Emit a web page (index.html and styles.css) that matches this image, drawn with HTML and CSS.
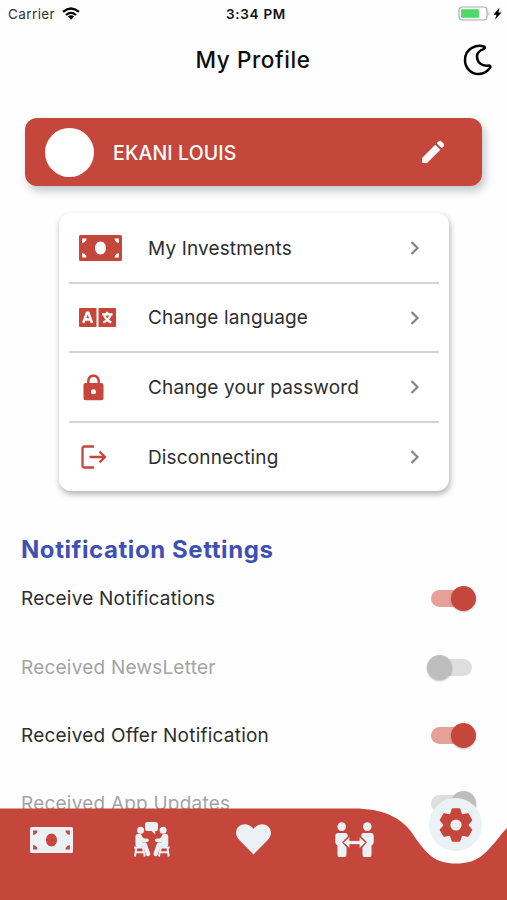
FILE: index.html
```html
<!DOCTYPE html>
<html lang="en">
<head>
<meta charset="utf-8">
<title>My Profile</title>
<link rel="stylesheet" href="styles.css">
</head>
<body>
<svg class="defs" width="0" height="0">
  <symbol id="chevron" viewBox="0 0 10 16"><path d="M1.500 2l6 6-6 6" fill="none" stroke="currentColor" stroke-width="2.200"/></symbol>
  <symbol id="cash" viewBox="0 0 43 26"><path fill="currentColor" fill-rule="evenodd" d="M1.500 0h40A1.500 1.500 0 0 1 43 1.500v23a1.500 1.500 0 0 1-1.500 1.500h-40A1.500 1.500 0 0 1 0 24.500v-23A1.500 1.500 0 0 1 1.500 0zM21.500 6.500c-3.100 0-5.500 2.900-5.500 6.500s2.400 6.500 5.500 6.500S27 16.600 27 13s-2.400-6.500-5.500-6.500zM3.200 3.500V8q4-.6 4.300-4.500zM39.800 3.500V8q-4-.6-4.300-4.500zM3.200 22.500V18q4 .6 4.300 4.500zM39.800 22.500V18q-4 .6-4.300 4.500z"/></symbol>
</svg>
<div class="screen">
  <div class="status">
    <span class="carrier">Carrier</span>
    <svg class="wifi" width="18" height="13" viewBox="0 0 18 13"><g fill="none" stroke="#000" stroke-width="2.200"><path d="M1 4.900Q9-1.900 17 4.900"/><path d="M4 8Q9 3.800 14 8"/></g><path d="M5.900 9.500Q9 7.200 12.100 9.500L9 12.700z"/></svg>
    <span class="time">3:34 PM</span>
    <svg class="battery" width="46" height="16" viewBox="0 0 46 16"><rect x="1" y="1" width="28" height="13" rx="3.500" fill="#fff" stroke="#aaa" stroke-width="1.200"/><rect x="3" y="3.200" width="18" height="8.600" rx="1" fill="#4cd964"/><path d="M30.500 5.500q2 2 0 4z" fill="#aaa"/><path d="M41.500 1.500L35.500 8.700h3L37 13.500 43.500 6.500h-3z"/></svg>
  </div>
  <header class="header">
    <h1>My Profile</h1>
    <svg class="moon" width="30" height="32" viewBox="0 0 30 32"><path d="M21.300 2.700C14 .2 2 4 2 16.200 2 24 8.300 30 15.600 30c5.200 0 9.400-2.900 11.500-6.300.8-1.500-.2-2.500-1.600-2.200C18.800 22.500 14 18.500 14 12.300c0-3.500 2.500-5.800 6.500-7.200 1.500-.6 1.700-1.900.8-2.400z" fill="none" stroke="#000" stroke-width="2.500" stroke-linejoin="round"/></svg>
  </header>
  <section class="profile">
    <span class="avatar"></span>
    <span class="name">EKANI LOUIS</span>
    <svg class="pencil" width="24" height="24" viewBox="0 0 24 24"><path fill="#fff" stroke="#fff" stroke-width="1.500" stroke-linejoin="round" d="M1.800 18.200L14.300 5.700l4 4L5.800 22.200h-4zM16.700 3.300l1.300-1.300q1-.8 2 0l2 2q.8 1 0 2l-1.300 1.300z"/></svg>
  </section>
  <nav class="menu">
    <div class="item"><span class="icon"><svg width="43" height="26"><use href="#cash"/></svg></span><span>My Investments</span><svg class="chev" width="10" height="16"><use href="#chevron"/></svg></div>
    <div class="item"><span class="icon"><svg width="37" height="19" viewBox="0 0 37 19"><path fill="currentColor" d="M1 0h16.500v19H1a1 1 0 0 1-1-1V1a1 1 0 0 1 1-1zM19.500 0H36a1 1 0 0 1 1 1v17a1 1 0 0 1-1 1H19.500z"/><path d="M4.300 14.800L8 4.700h1.400l3.600 10.100M5.500 11.600h6.400" fill="none" stroke="#fff" stroke-width="2.500"/><path d="M23 6.400h10.500M28.200 3.800v2.600M31.500 7c-1 3.700-4 6-7.300 7.600M25.300 7.500c1.300 3.200 3.500 5.400 7 7.100" fill="none" stroke="#fff" stroke-width="2.200"/></svg></span><span>Change language</span><svg class="chev" width="10" height="16"><use href="#chevron"/></svg></div>
    <div class="item"><span class="icon lock"><svg width="21" height="27" viewBox="0 0 21 27"><path fill="currentColor" fill-rule="evenodd" d="M4.100 9V7.200C4.100 3.200 6.800.5 10.500.5s6.400 2.700 6.400 6.700V9h1.600a2 2 0 0 1 2 2v13.300a2 2 0 0 1-2 2h-16a2 2 0 0 1-2-2V11a2 2 0 0 1 2-2zM6.500 9h8V7.200c0-2.700-1.600-4.300-4-4.300s-4 1.600-4 4.300zM10.500 15.200a2.500 2.500 0 1 0 0 5 2.500 2.500 0 1 0 0-5z"/></svg></span><span>Change your password</span><svg class="chev" width="10" height="16"><use href="#chevron"/></svg></div>
    <div class="item"><span class="icon exit"><svg width="26" height="24" viewBox="0 0 26 24"><path d="M13 1.500H3.500a2 2 0 0 0-2 2v17a2 2 0 0 0 2 2H13M8.500 12H24M18.500 6.500L24 12l-5.500 5.500" fill="none" stroke="currentColor" stroke-width="2.300"/></svg></span><span>Disconnecting</span><svg class="chev" width="10" height="16"><use href="#chevron"/></svg></div>
  </nav>
  <section class="settings">
    <h2>Notification Settings</h2>
    <div class="row"><span>Receive Notifications</span><span class="switch on"></span></div>
    <div class="row off"><span>Received NewsLetter</span><span class="switch"></span></div>
    <div class="row"><span>Received Offer Notification</span><span class="switch on"></span></div>
    <div class="row off"><span>Received App Updates</span><span class="switch on disabled"></span></div>
  </section>
  <footer class="tabbar">
    <svg class="wave" width="507" height="92" viewBox="0 0 507 92"><path fill="#c5463a" d="M0 0.500H354C382 .500 401 9 412 25C427 47 435 55.500 456 55.500C477 55.500 485 47 500 28Q504 23 507 20V92H0z"/></svg>
    <div class="tabs">
      <svg width="43" height="26"><use href="#cash"/></svg>
      <svg width="36" height="35" viewBox="0 0 36 35"><g fill="currentColor"><path d="M13.500 0h8q2.500 0 2.500 2.500v4Q24 9 22 9h-.8v3.300L17.500 9h-4Q11 9 11 6.500v-4Q11 0 13.500 0z"/><circle cx="6.600" cy="8.200" r="3.500"/><circle cx="29.100" cy="8.200" r="3.500"/></g><g id="sitter" fill="none" stroke="currentColor"><path d="M4.700 15V22" stroke-width="6.500" stroke-linecap="round"/><path d="M7 16l2 2.300h4" stroke-width="3.600" stroke-linecap="round" stroke-linejoin="round"/><path d="M5 22.500h5.800l3.300 9.500" stroke-width="4.300" stroke-linejoin="round" stroke-linecap="round"/><path d="M0 25.500h10M2.200 26L1 34.500M9 26l1.800 8.500M2 30.200h8" stroke-width="2"/></g><use href="#sitter" transform="matrix(-1 0 0 1 35.700 0)"/></svg>
      <svg width="35" height="31" viewBox="0 0 35 31"><path fill="currentColor" d="M17.500 30.500L3.300 16C-1.200 11.400-.6 5.600 2.800 2.500 7-1.300 13.500-.4 17.500 4.800 21.500-.4 28-1.300 32.200 2.500c3.400 3.100 4 8.900-.5 13.500z"/></svg>
      <svg width="39" height="36" viewBox="0 0 39 36"><g id="person" fill="currentColor"><circle cx="6.700" cy="4.600" r="4.300"/><path d="M3 11h7.200q2.500 0 2.500 2.500v1L7 20.300l4.500 5.200V33q0 2-2 2h-5.500q-1.500 0-1.500-2v-9.500Q.3 22.800.3 20v-6Q.3 11 3 11z"/></g><use href="#person" transform="matrix(-1 0 0 1 39 0)"/><path d="M8.300 20.600l6.500-6v4h9.400v-4l6.500 6-6.500 6v-4h-9.400v4z" fill="currentColor" stroke="#c5463a" stroke-width=".8"/></svg>
      <span class="active"><svg width="36" height="36" viewBox="-18 -18 36 36"><g fill="#c5463a"><circle r="12.600"/><path id="tooth" d="M-6.300-10L-4.500-15.500Q-4.200-16.700-3.200-16.700H3.200Q4.200-16.700 4.500-15.500L6.300-10V10L4.500 15.500Q4.200 16.700 3.200 16.700H-3.200Q-4.200 16.700-4.500 15.500L-6.300 10z"/><use href="#tooth" transform="rotate(60)"/><use href="#tooth" transform="rotate(120)"/></g><circle r="5.600" fill="#ebf1f4"/></svg></span>
    </div>
  </footer>
</div>
</body>
</html>
```
FILE: styles.css
```css
* { box-sizing: border-box; margin: 0; padding: 0; }
body { font-family: Inter, "Liberation Sans", sans-serif; background: #fff; color: #2e2e2e; }
svg { display: block; flex: none; }
.defs { position: absolute; }
.screen { position: relative; width: 507px; height: 900px; overflow: hidden; background: #fefefe; }
.status { display: grid; grid-template-columns: 54px 160px 1fr 49px; align-items: center; height: 27px; padding-left: 8px; color: #111; font-size: 13.500px; }
.carrier { letter-spacing: .4px; color: #333; }
.time { font-weight: 600; letter-spacing: .7px; padding-left: 4px; }
.header { display: grid; grid-template-columns: 1fr 116px 1fr; align-items: center; height: 66px; }
.header h1 { grid-column: 2; font-size: 22.500px; font-weight: 500; color: #0d0d0d; white-space: nowrap; letter-spacing: .6px; line-height: 28px; }
.moon { justify-self: end; margin-right: 14px; margin-top: -1px; }
.profile { display: flex; align-items: center; width: 457px; height: 68px; margin: 25px 0 0 25px; padding: 0 37px 0 20px; border-radius: 12px; background: #c5463a; box-shadow: 3px 5px 9px rgba(40, 50, 60, .28); }
.avatar { width: 49px; height: 49px; border-radius: 50%; background: #fff; }
.name { margin: 2px 0 0 19px; color: #fff; font-size: 19.500px; font-weight: 500; letter-spacing: .13px; }
.pencil { margin-left: auto; }
.menu { width: 390px; height: 278px; margin: 27px 0 0 59px; padding: 1px 10px 0; border-radius: 12px; background: #fff; box-shadow: 1px 3px 6px rgba(0, 0, 0, .32); }
.item { display: grid; grid-template-columns: 69px 1fr 10px; align-items: center; height: 69.500px; padding: 1px 19px 0 10px; border-bottom: 2px solid #d4d4d4; font-size: 19px; white-space: nowrap; letter-spacing: .14px; }
.item:last-child { border: 0; padding-top: 0; }
.icon { color: #c5463a; }
.lock { padding-left: 4px; }
.exit { padding-left: 2px; }
.chev { color: #858585; }
.settings { padding: 43px 31px 0 21px; }
.settings h2 { height: 31px; line-height: 31px; color: #3e50b4; font-size: 24px; font-weight: 700; letter-spacing: .58px; white-space: nowrap; }
.row { display: flex; align-items: center; justify-content: space-between; height: 68.400px; font-size: 19px; letter-spacing: .22px; white-space: nowrap; }
.settings h2 + .row { margin-top: -.4px; }
.row.off { color: #a3a3a3; }
.switch { position: relative; width: 41px; height: 17px; margin-right: 4px; border-radius: 9px; background: #dedede; }
.switch::after { content: ""; position: absolute; top: -4px; left: -4px; width: 25px; height: 25px; border-radius: 50%; background: #bdbdbd; box-shadow: 0 1px 2px rgba(0, 0, 0, .25); }
.switch.on { background: #e5a09a; }
.switch.on::after { left: 20px; background: #c5463a; }
.switch.disabled { background: #dedede; }
.switch.disabled::after { background: #bdbdbd; }
.tabbar { position: absolute; left: 0; bottom: 0; width: 507px; height: 92px; color: #ebf1f5; }
.wave { position: absolute; inset: 0; }
.tabs { position: relative; display: grid; grid-template-columns: repeat(5, 101.200px); height: 63px; align-items: center; justify-items: center; padding-left: .5px; }
.active { display: grid; place-items: center; width: 53px; height: 53px; border-radius: 50%; background: #ebf1f4; transform: translateY(-15px); }
```
